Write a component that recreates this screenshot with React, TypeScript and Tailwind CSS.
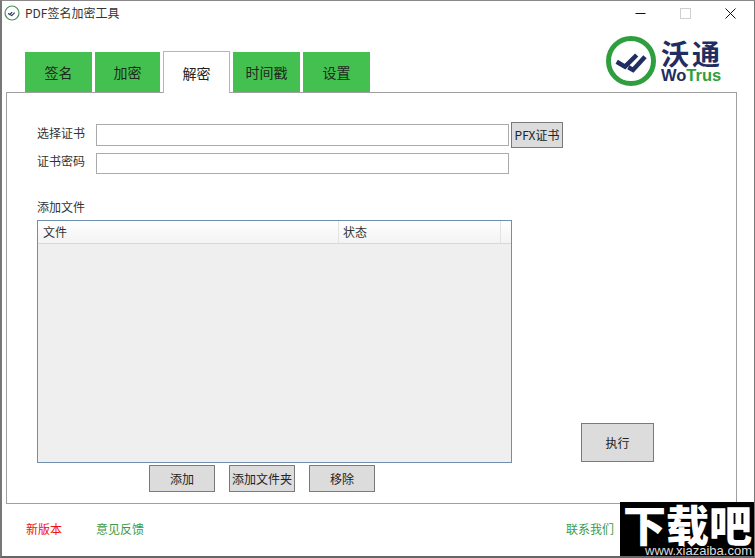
import React from 'react';

const cjk = { fontFamily: "'Noto Sans CJK SC', 'Noto Sans', sans-serif" };

function WotrusMark({ size, ring }: { size: number; ring: number }) {
  return (
    <svg width={size} height={size} viewBox="0 0 50 50" className="shrink-0">
      <circle cx="25" cy="25" r={25 - ring / 2} fill="#fff" stroke="#2f9e3f" strokeWidth={ring} />
      <path d="M10.7 25.7l8.3 5 11.7-11.7M22.3 31.3l4.7 2.7 12-13.3" fill="none" stroke="#1f2d63" strokeWidth="4.5" />
    </svg>
  );
}

function Tab({ label, active, w }: { label: string; active?: boolean; w: string }) {
  if (active) {
    return (
      <div className={`${w} relative z-10 -mb-px flex h-[42px] items-center justify-center border border-b-0 border-[#b5b5b5] bg-white text-sm text-[#222]`}>
        {label}
      </div>
    );
  }
  return (
    <div className={`${w} flex h-[40px] items-center justify-center bg-[#43c04f] text-sm text-[#1d2b1d]`}>
      {label}
    </div>
  );
}

function GrayButton({ label, w }: { label: string; w: string }) {
  return (
    <button className={`${w} flex h-[27px] items-center justify-center whitespace-nowrap border border-[#7a7a7a] bg-[#dcdcdc] text-xs text-[#222]`}>
      {label}
    </button>
  );
}

export default function App() {
  return (
    <div
      className="relative flex h-[558px] w-[755px] flex-col overflow-hidden border-t border-l-2 border-r border-b-2 border-t-[#8a8a8a] border-l-[#777] border-r-[#777] border-b-[#666] bg-white"
      style={cjk}
    >
      {/* title + tabs on the left, window controls + logo on the right */}
      <div className="flex h-[91px] shrink-0">
        <div className="flex flex-1 flex-col">
          <div className="flex h-[51px] items-start gap-[5px] pl-[2px] pt-[4px]">
            <svg width="16" height="16" viewBox="0 0 16 16" className="shrink-0">
              <circle cx="8" cy="8" r="7" fill="#fff" stroke="#4c8f5a" strokeWidth="1.2" />
              <path d="M4 8.5l1.8 1 2.4-2.4M6.5 10l1.2.6 3-3" fill="none" stroke="#2a3566" strokeWidth="1.2" />
            </svg>
            <span className="text-xs leading-[16px] text-[#333]">PDF签名加密工具</span>
          </div>
          <div className="flex items-end gap-[3px] pl-[23px]">
            <Tab label="签名" w="w-[67px]" />
            <Tab label="加密" w="w-[65px]" />
            <Tab label="解密" active w="w-[67px]" />
            <Tab label="时间戳" w="w-[67px]" />
            <Tab label="设置" w="w-[67px]" />
          </div>
        </div>
        <div className="flex w-[150px] flex-col">
          <div className="flex h-[35px] items-start gap-[34px] pl-[31px] pt-[7px]">
            <svg width="11" height="11" viewBox="0 0 11 11"><path d="M0.5 5.5h10" stroke="#111" strokeWidth="1" /></svg>
            <svg width="11" height="11" viewBox="0 0 11 11"><rect x="0.5" y="0.5" width="10" height="10" fill="none" stroke="#cfcfcf" /></svg>
            <svg width="11" height="11" viewBox="0 0 11 11"><path d="M0.5 0.5l10 10M10.5 0.5l-10 10" stroke="#111" strokeWidth="1" /></svg>
          </div>
          <div className="flex items-center gap-[5px] pl-[2px]">
            <WotrusMark size={50} ring={5} />
            <div className="flex flex-col">
              <span className="text-[28px] font-bold leading-[26px] tracking-[3px] text-[#1f2d63]">沃通</span>
              <span className="mt-[2px] text-[16.5px] font-bold leading-[15px] text-[#1f2d63]" style={{ fontFamily: "'Liberation Sans', sans-serif" }}>
                Wo<span className="text-[#2f9e3f]">Trus</span>
              </span>
            </div>
          </div>
        </div>
      </div>

      {/* panel */}
      <div className="ml-[4px] flex h-[412px] w-[731px] shrink-0 border border-[#a0a0a0] bg-white pl-[30px]">
        <div className="flex w-[527px] flex-col pt-[29px]">
          <div className="flex items-center">
            <span className="w-[59px] pb-[4px] text-xs text-[#333]">选择证书</span>
            <div className="h-[22px] w-[413px] border border-[#ababab]" />
            <button className="ml-[2px] flex h-[26px] w-[52px] items-center justify-center whitespace-nowrap border border-[#7a7a7a] bg-[#dcdcdc] text-xs text-[#222]">
              PFX证书
            </button>
          </div>
          <div className="mt-[5px] flex h-[21px] items-start">
            <span className="w-[59px] text-xs leading-[16px] text-[#333]">证书密码</span>
            <div className="h-[21px] w-[413px] border border-[#ababab]" />
          </div>

          <span className="mt-[25px] text-xs leading-[16px] text-[#333]">添加文件</span>

          <div className="mt-[5px] flex h-[243px] w-[475px] flex-col border border-[#6f8fae] bg-[#efefef]">
            <div className="flex h-[23px] shrink-0 border-b border-[#d5d9de] bg-gradient-to-b from-white to-[#f3f3f3] text-xs text-[#333]">
              <div className="flex w-[301px] items-center border-r border-[#e3e3e3] pl-[5px]">文件</div>
              <div className="flex w-[162px] items-center border-r border-[#e3e3e3] pl-[4px]">状态</div>
            </div>
          </div>

          <div className="mt-[2px] flex gap-[14px] pl-[112px]">
            <GrayButton label="添加" w="w-[66px]" />
            <GrayButton label="添加文件夹" w="w-[66px]" />
            <GrayButton label="移除" w="w-[66px]" />
          </div>
        </div>
        <div className="flex flex-1 flex-col justify-end pb-[41px] pl-[17px]">
          <button className="flex h-[39px] w-[73px] items-center justify-center border border-[#7a7a7a] bg-[#dcdcdc] text-xs text-[#222]">
            执行
          </button>
        </div>
      </div>

      {/* footer links */}
      <div className="flex flex-1 items-center pb-[3px] pl-[24px] text-xs">
        <span className="w-[70px] text-[#f01010]">新版本</span>
        <span className="text-[#3a9a46]">意见反馈</span>
        <span className="ml-[422px] text-[#3a9a46]">联系我们</span>
      </div>

      {/* download-site watermark */}
      <div className="absolute bottom-[-2px] right-[-1px] flex h-[56px] w-[135px] flex-col items-center bg-black text-white">
        <span className="text-[43px] font-black leading-[42px]">下载吧</span>
        <span className="w-full pr-[3px] text-right text-[13px] leading-[14px] text-[#dddddd]" style={{ fontFamily: "'Liberation Sans', sans-serif" }}>www.xiazaiba.com</span>
      </div>
    </div>
  );
}
